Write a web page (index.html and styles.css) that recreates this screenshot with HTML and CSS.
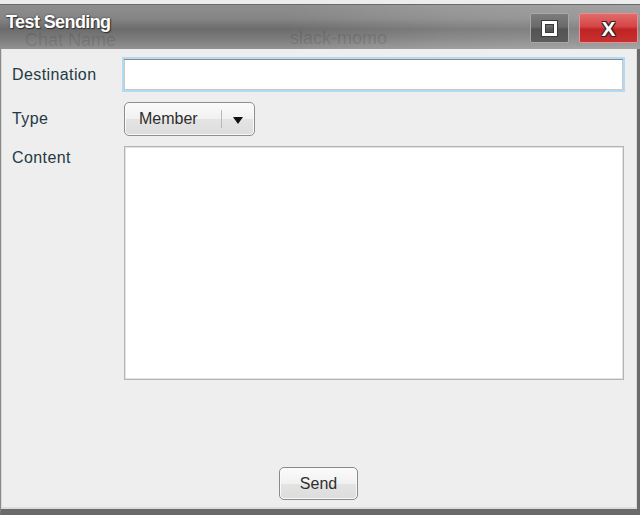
FILE: index.html
```html
<!DOCTYPE html>
<html>
<head>
<meta charset="utf-8">
<link rel="stylesheet" href="styles.css">
</head>
<body>
<div class="page">
  <div class="titlebar">
    <span class="ghost ghost-1">Chat Name</span>
    <span class="ghost ghost-2">slack-momo</span>
    <div class="title">Test Sending</div>
    <div class="controls">
      <div class="btn-max"><span class="max-icon"></span></div>
      <div class="btn-close"><span class="close-x">X</span></div>
    </div>
  </div>
  <div class="frame">
    <div class="form">
      <label class="lbl lbl-mid">Destination</label>
      <div class="field"><div class="input"></div></div>
      <label class="lbl lbl-mid">Type</label>
      <div class="field">
        <div class="combo">
          <span class="combo-text">Member</span>
          <span class="combo-sep"></span>
          <span class="combo-arrow"></span>
        </div>
      </div>
      <label class="lbl lbl-top">Content</label>
      <div class="field"><div class="textarea"></div></div>
    </div>
    <div class="actions">
      <div class="btn-send">Send</div>
    </div>
  </div>
</div>
</body>
</html>
```
FILE: styles.css
```css
* { box-sizing: border-box; }
html, body { margin: 0; padding: 0; }
body {
  width: 640px;
  height: 515px;
  overflow: hidden;
  background: #ececec;
  font-family: "Liberation Sans", Arial, sans-serif;
}
.page {
  width: 640px;
  height: 515px;
  display: flex;
  flex-direction: column;
  padding-top: 4px;
  background: #ececec;
}
.titlebar {
  position: relative;
  height: 45px;
  flex: none;
  display: flex;
  align-items: flex-start;
  justify-content: space-between;
  background:
    linear-gradient(100deg, rgba(255,255,255,0) 0%, rgba(255,255,255,0) 45%, rgba(255,255,255,0.12) 70%, rgba(255,255,255,0.18) 100%),
    linear-gradient(to bottom, #8e8e8e 0%, #858585 30%, #6c6c6c 55%, #7a7a7a 75%, #929292 100%);
  border-top: 1px solid #6a6a6a;
  overflow: hidden;
}
.ghost {
  position: absolute;
  color: rgba(40,40,40,0.16);
  font-size: 18px;
  line-height: 16px;
}
.ghost-1 { left: 25px; top: 27px; }
.ghost-2 { left: 290px; top: 25px; }
.title {
  position: relative;
  margin: 8px 0 0 6px;
  color: #ffffff;
  font-weight: bold;
  font-size: 18px;
  line-height: 18px;
  letter-spacing: -0.6px;
  text-shadow: 0 0 2px #333, 1px 1px 1px #333;
}
.controls {
  display: flex;
  gap: 10px;
  margin-top: 8px;
  margin-right: 2px;
}
.btn-max {
  width: 39px;
  height: 30px;
  border: 1px solid #a8a8a8;
  border-radius: 2px;
  background: linear-gradient(to bottom, #7c7c7c 0%, #6a6a6a 45%, #545454 55%, #5c5c5c 100%);
  display: flex;
  align-items: center;
  justify-content: center;
}
.max-icon {
  width: 15px;
  height: 15px;
  border: 3px solid #ffffff;
  box-shadow: 0 0 0 1px #3a3a3a, inset 0 0 0 1px #3a3a3a;
}
.btn-close {
  width: 59px;
  height: 30px;
  border: 1px solid #e89090;
  border-radius: 2px;
  background: linear-gradient(to bottom, #e26a6a 0%, #d54545 45%, #c02424 55%, #c83030 100%);
  display: flex;
  align-items: center;
  justify-content: center;
}
.close-x {
  color: #ffffff;
  font-weight: bold;
  font-size: 21px;
  line-height: 1;
  text-shadow: -1px -1px 0 #3a2020, 1px -1px 0 #3a2020, -1px 1px 0 #3a2020, 1px 1px 0 #3a2020;
}
.frame {
  flex: 1;
  display: flex;
  flex-direction: column;
  background: #eeeeee;
  border-left: 1px solid #8a8a8a;
  border-right: 3px solid #6a6a6a;
  border-bottom: 6px solid #6a6a6a;
  box-shadow: inset 1px 0 0 #d8d8d8, inset -1px 0 0 #dcdcdc, inset 0 -2px 0 #dcdcdc;
  padding: 8px 12px 9px 11px;
}
.form {
  display: grid;
  grid-template-columns: 110px 1fr;
  grid-template-rows: 35px 34px 234px;
  row-gap: 10px;
}
.lbl {
  color: #233a44;
  font-size: 16px;
  letter-spacing: 0.4px;
}
.lbl-mid { align-self: center; }
.lbl-top { padding-top: 3px; }
.field { display: flex; }
.input {
  width: 503px;
  height: 35px;
  background: #ffffff;
  border: 2px solid #b2daf5;
  box-shadow: inset 0 1px 0 #8c8c8c, inset 0 0 0 1px #c8c8c8;
}
.combo {
  margin-left: 2px;
  width: 131px;
  height: 34px;
  border: 1px solid #8e8e8e;
  border-radius: 5px;
  background: linear-gradient(to bottom, #fbfbfb 0%, #f1f1f1 50%, #e4e4e4 51%, #dcdcdc 100%);
  box-shadow: inset 0 0 0 1px #fafafa;
  display: flex;
  align-items: center;
  padding-left: 14px;
}
.combo-text {
  font-size: 16px;
  color: #2e2e2e;
  width: 82px;
}
.combo-sep {
  width: 1px;
  height: 18px;
  background: #b8b8b8;
}
.combo-arrow {
  margin-left: 11px;
  width: 0;
  height: 0;
  border-left: 5px solid transparent;
  border-right: 5px solid transparent;
  border-top: 7px solid #111;
  margin-top: 2px;
}
.textarea {
  margin-left: 2px;
  width: 500px;
  height: 234px;
  background: #ffffff;
  border: 1px solid #b4b4b4;
  box-shadow: inset 0 0 0 1px #e2e2e2;
}
.actions {
  margin-top: auto;
  display: flex;
  justify-content: center;
}
.btn-send {
  width: 79px;
  height: 33px;
  border: 1px solid #8a8a8a;
  border-radius: 5px;
  background: linear-gradient(to bottom, #fbfbfb 0%, #f1f1f1 50%, #e4e4e4 51%, #dcdcdc 100%);
  box-shadow: inset 0 0 0 1px #fafafa;
  display: flex;
  align-items: center;
  justify-content: center;
  font-size: 16px;
  color: #2e2e2e;
}
```
